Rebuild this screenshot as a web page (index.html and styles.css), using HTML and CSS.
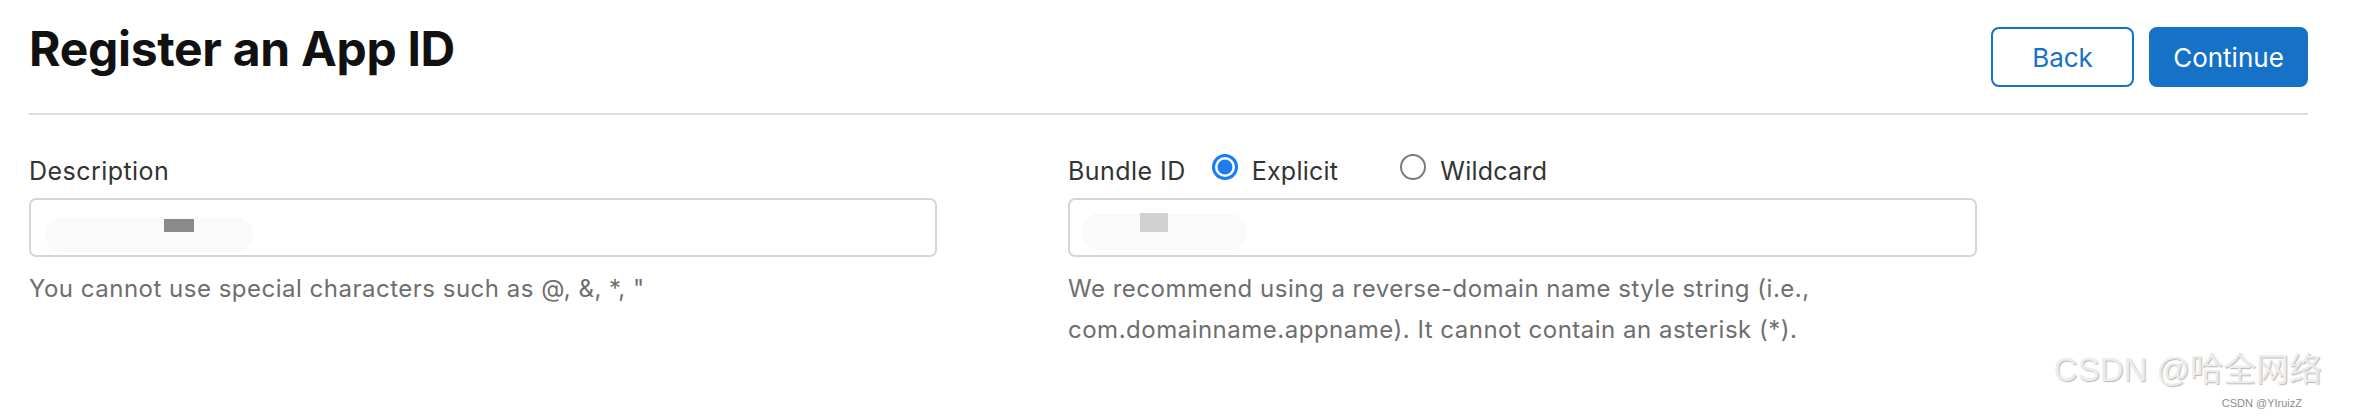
FILE: index.html
```html
<!DOCTYPE html>
<html lang="en">
<head>
<meta charset="utf-8">
<title>Register an App ID</title>
<link rel="stylesheet" href="styles.css">
</head>
<body>
<div class="page">
  <header class="header">
    <h1 class="title">Register an App ID</h1>
    <div class="actions">
      <button class="btn btn-secondary">Back</button>
      <button class="btn btn-primary">Continue</button>
    </div>
  </header>

  <div class="form">
    <div class="field">
      <div class="label-row"><label class="label">Description</label></div>
      <div class="input">
        <span class="blob blob-desc"></span>
        <span class="mark mark-desc"></span>
      </div>
      <p class="help">You cannot use special characters such as @, &amp;, *, "</p>
    </div>

    <div class="field">
      <div class="label-row">
        <span class="label">Bundle ID</span>
        <span class="option option-explicit">
          <svg class="radio" width="26" height="26" viewBox="0 0 26 26"><circle cx="13" cy="13" r="13" fill="#1b7cf4"/><circle cx="13" cy="13" r="10" fill="#fff"/><circle cx="13" cy="13" r="7.5" fill="#1b7cf4"/></svg>
          <span class="option-text">Explicit</span>
        </span>
        <span class="option">
          <svg class="radio" width="26" height="26" viewBox="0 0 26 26"><circle cx="13" cy="13" r="12" fill="#fff" stroke="#7b7b7b" stroke-width="2"/></svg>
          <span class="option-text">Wildcard</span>
        </span>
      </div>
      <div class="input">
        <span class="blob blob-bundle"></span>
        <span class="mark mark-bundle"></span>
      </div>
      <p class="help">We recommend using a reverse-domain name style string (i.e., com.domainname.appname). It cannot contain an asterisk (*).</p>
    </div>
  </div>

  <div class="watermark">
    <span class="wm-big">CSDN @哈全网络</span>
    <span class="wm-small">CSDN @YIruizZ</span>
  </div>
</div>
</body>
</html>
```

FILE: styles.css
```css
html, body {
  margin: 0;
  padding: 0;
  background: #ffffff;
}

body {
  font-family: Inter, "Noto Sans", "Liberation Sans", sans-serif;
  color: #1d1d1f;
}

.page {
  position: relative;
  height: 416px;
  box-sizing: border-box;
  padding: 0 56px 0 29px;
  overflow: hidden;
}

.header {
  display: flex;
  justify-content: space-between;
  align-items: flex-start;
  height: 113px;
  border-bottom: 2px solid #dcdcdc;
}

.title {
  margin: 20px 0 0 0;
  font-size: 48px;
  line-height: 58px;
  font-weight: 700;
  letter-spacing: -0.3px;
  color: #111111;
}

.actions {
  display: flex;
  gap: 15px;
  margin-top: 27px;
}

.btn {
  height: 60px;
  box-sizing: border-box;
  border-radius: 8px;
  font-family: Inter, "Noto Sans", sans-serif;
  font-size: 26px;
  font-weight: 400;
  cursor: pointer;
  padding: 0;
}

.btn-secondary {
  width: 143px;
  background: #ffffff;
  color: #1672c6;
  border: 2px solid #1672c6;
}

.btn-primary {
  width: 159px;
  background: #1672c6;
  color: #ffffff;
  border: 2px solid #1672c6;
}

.form {
  display: grid;
  grid-template-columns: 908px 909px;
  column-gap: 131px;
  padding-top: 39px;
}

.label-row {
  display: flex;
  align-items: center;
  height: 34px;
}

.label {
  font-size: 25px;
  line-height: 34px;
  letter-spacing: 0.45px;
  color: #333333;
}

.option {
  display: flex;
  align-items: center;
}

.option-explicit {
  margin-left: 26px;
  margin-right: 62px;
}

.radio {
  display: block;
  margin-bottom: 8px;
}

.option-text {
  margin-left: 14px;
  font-size: 25px;
  line-height: 34px;
  letter-spacing: 0.25px;
  color: #333333;
}

.input {
  position: relative;
  margin-top: 10px;
  height: 59px;
  box-sizing: border-box;
  border: 2px solid #d6d6d6;
  border-radius: 7px;
  background: #ffffff;
}

.blob {
  position: absolute;
  background: #fafafa;
  border-radius: 18px;
}

.blob-desc {
  left: 14px;
  top: 17px;
  width: 208px;
  height: 35px;
}

.blob-bundle {
  left: 12px;
  top: 13px;
  width: 165px;
  height: 37px;
}

.mark {
  position: absolute;
}

.mark-desc {
  left: 133px;
  top: 19px;
  width: 30px;
  height: 13px;
  background: #8a8a8a;
}

.mark-bundle {
  left: 70px;
  top: 13px;
  width: 28px;
  height: 19px;
  background: #d0d0d0;
}

.help {
  margin: 11px 0 0 0;
  font-size: 24px;
  line-height: 41px;
  letter-spacing: 0.5px;
  color: #6e6e6e;
}

.watermark {
  position: absolute;
  right: 42px;
  top: 350px;
  height: 66px;
  pointer-events: none;
}

.wm-big {
  display: block;
  font-family: "Liberation Sans", "Noto Sans CJK SC", sans-serif;
  font-size: 33px;
  line-height: 40px;
  color: #ececec;
  text-shadow: 1px 1px 1px rgba(0, 0, 0, 0.28);
  white-space: nowrap;
}

.wm-small {
  position: absolute;
  right: 20px;
  top: 47px;
  font-family: "Liberation Sans", sans-serif;
  font-size: 11px;
  line-height: 13px;
  color: #8d8d8d;
  white-space: nowrap;
}
```
